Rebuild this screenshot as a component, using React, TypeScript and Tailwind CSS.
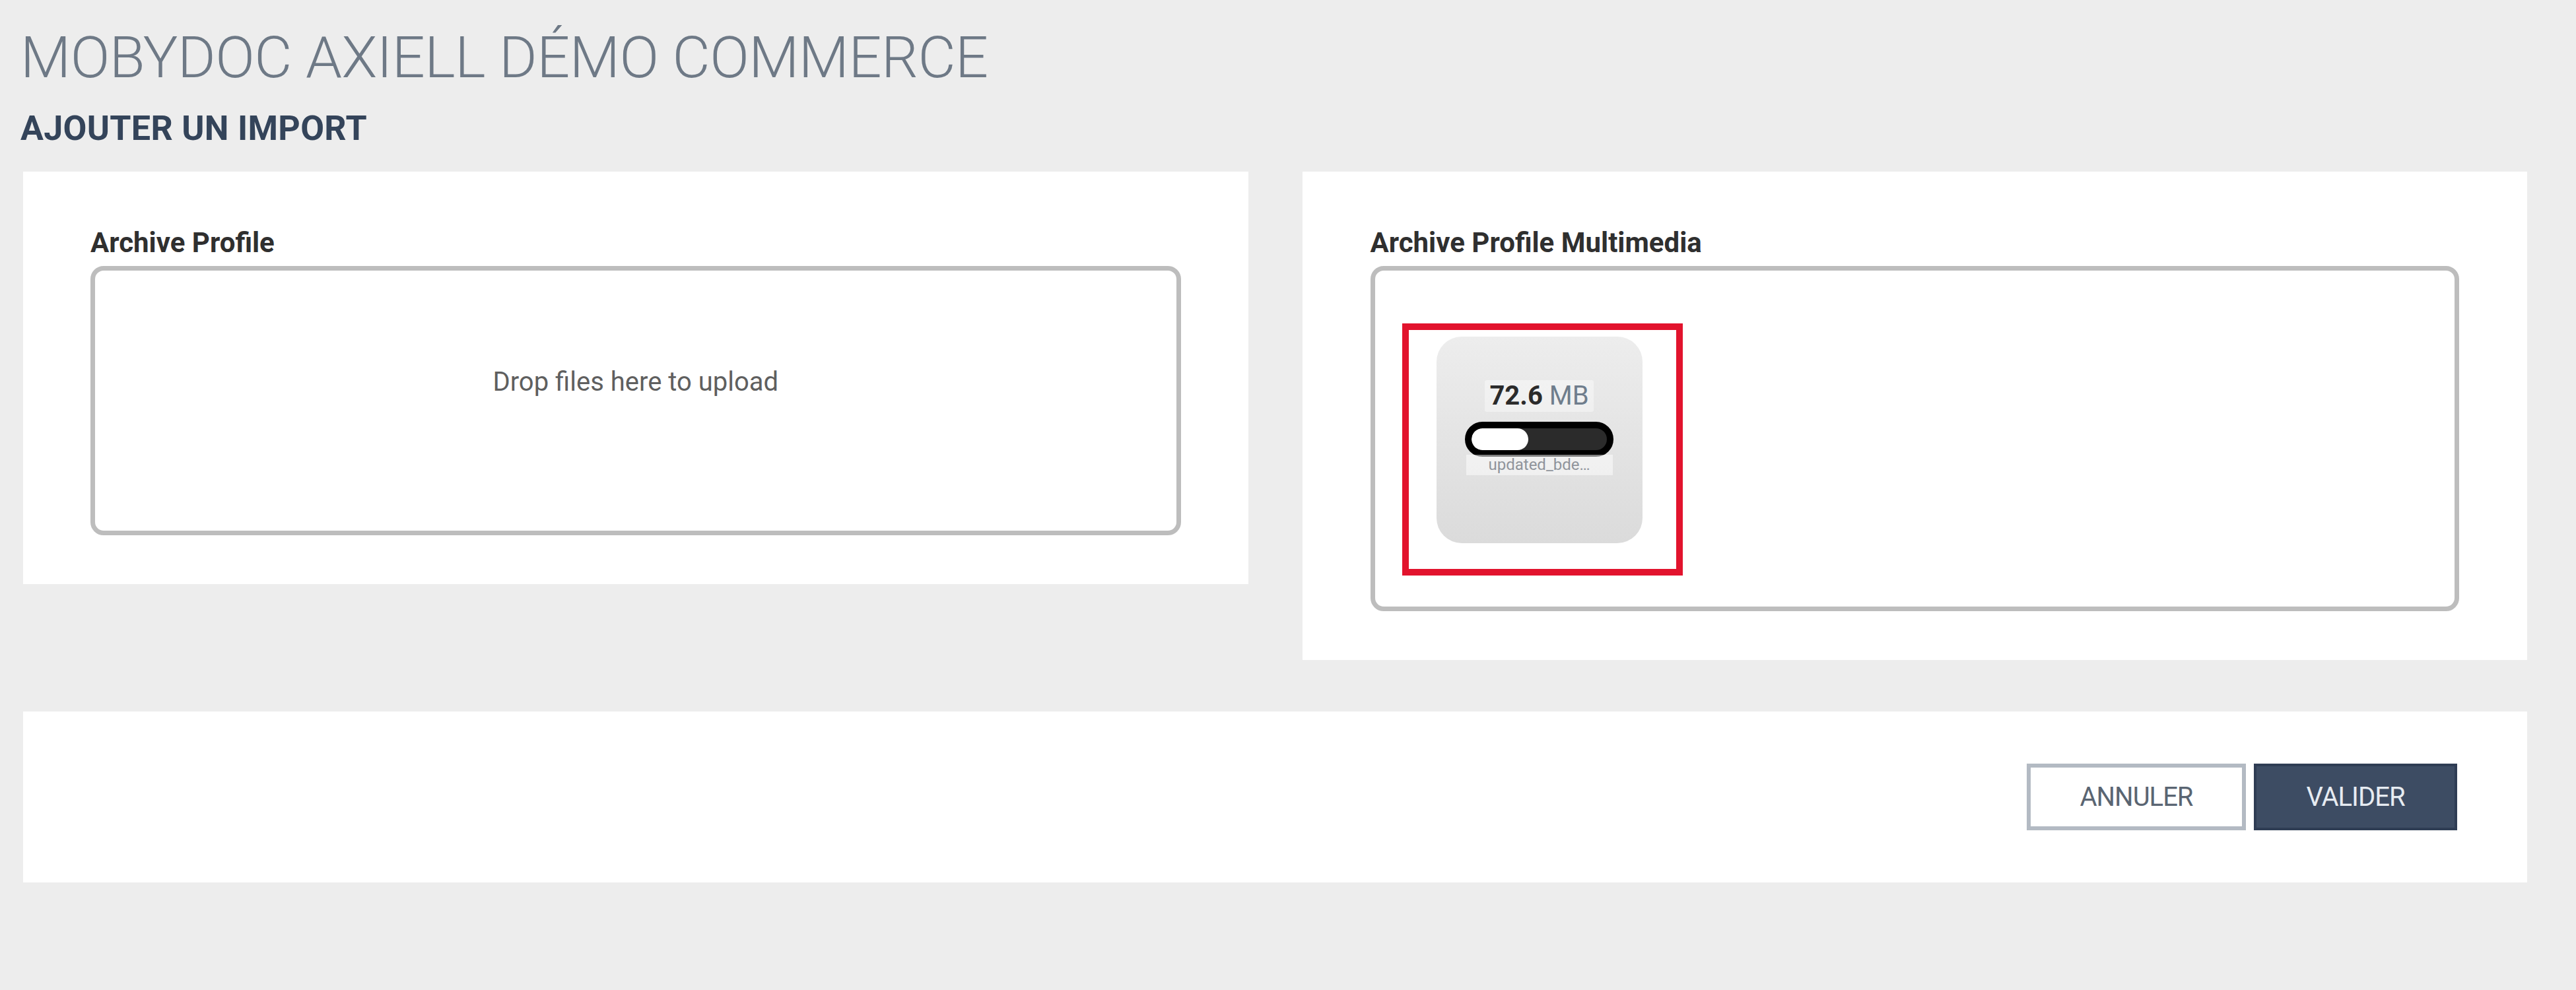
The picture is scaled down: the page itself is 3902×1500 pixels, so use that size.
import React from "react";

export default function App() {
  return (
    <div className="w-[3902px] h-[1500px] bg-[#ededed] font-['Roboto',sans-serif] overflow-hidden">
      <div className="pt-[43px] pl-[31px]">
        <h1 className="text-[88px] leading-none font-light text-[#6e7986] tracking-[-0.5px]">
          MOBYDOC AXIELL DÉMO COMMERCE
        </h1>
        <h2 className="mt-[38px] text-[52px] leading-none font-bold text-[#34445a] tracking-[0.3px]">
          AJOUTER UN IMPORT
        </h2>
      </div>

      <div className="ml-[35px] w-[3793px] mt-[39px]">
        <div className="grid grid-cols-2 gap-[82px] items-start">
          {/* Left panel */}
          <div className="bg-white pt-[87px] pb-[74px] px-[102px]">
            <div className="text-[42px] leading-none font-bold text-[#2f2f2f]">Archive Profile</div>
            <div className="mt-[14px] h-[408px] border-[7px] border-[#bdbdbd] rounded-[20px] bg-white pt-[149px] text-center">
              <span className="text-[40px] leading-none text-[#5f5f5f]">Drop files here to upload</span>
            </div>
          </div>

          {/* Right panel */}
          <div className="bg-white pt-[87px] pb-[74px] px-[103px]">
            <div className="text-[42px] leading-none font-bold text-[#2f2f2f]">Archive Profile Multimedia</div>
            <div className="mt-[14px] h-[523px] border-[7px] border-[#bdbdbd] rounded-[20px] bg-white pt-[80px] pl-[41px]">
              <div className="inline-block border-[10px] border-[#e2132d] pl-[42px] pt-[10px] pr-[51px] pb-[39px]">
                <div className="w-[312px] h-[313px] rounded-[38px] bg-gradient-to-b from-[#ededed] to-[#dbdbdb] flex flex-col items-center pt-[66px]">
                  <div className="px-[7px] py-[4px] bg-white/40 rounded-[3px] text-[40px] leading-none whitespace-nowrap">
                    <span className="font-bold text-[#2b2b2b]">72.6</span>{" "}
                    <span className="text-[#6f7d8c]">MB</span>
                  </div>
                  <div className="mt-[15px] w-[225px] h-[53px] rounded-full border-[10px] border-black bg-[#2b2b2b] overflow-hidden">
                    <div className="h-full w-[42%] rounded-full bg-white" />
                  </div>
                  <div className="mt-[-3px] w-[222px] px-[4px] bg-white/50 text-[24px] leading-[31px] text-[#8f949b] text-center whitespace-nowrap">
                    updated_bde…
                  </div>
                </div>
              </div>
            </div>
          </div>
        </div>

        {/* Bottom panel */}
        <div className="mt-[78px] h-[259px] bg-white flex items-center justify-end pr-[106px] gap-[12px]">
          <button className="w-[332px] h-[101px] border-[6px] border-[#b3bac3] bg-white text-[40px] text-[#5a6572] tracking-[-1px]">
            ANNULER
          </button>
          <button className="w-[308px] h-[101px] border-[4px] border-[#2f3d54] bg-[#3d4c63] text-[40px] text-[#e6ebf1] tracking-[-1px]">
            VALIDER
          </button>
        </div>
      </div>
    </div>
  );
}
